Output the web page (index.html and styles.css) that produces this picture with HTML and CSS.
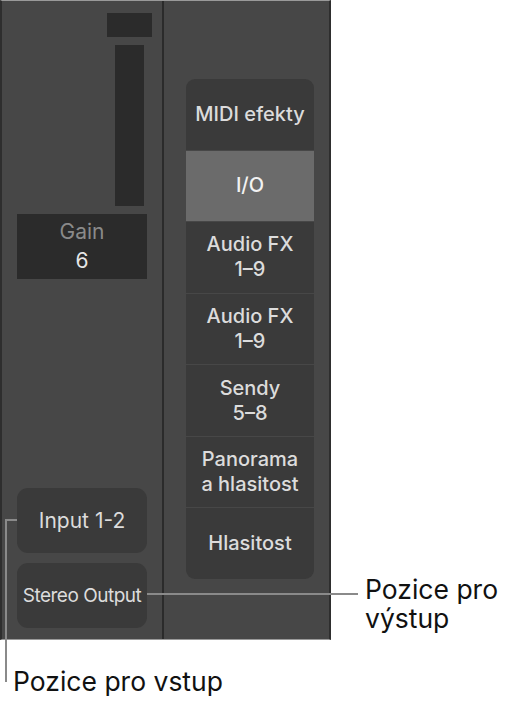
FILE: index.html
```html
<!DOCTYPE html>
<html lang="cs">
<head>
    <meta charset="UTF-8">
    <meta name="viewport" content="width=device-width, initial-scale=1.0">
    <title>Kanálový pás – pozice vstupu a výstupu</title>
    <link rel="stylesheet" href="styles.css">
</head>
<body>
    <div class="figure">
        <div class="top">
            <div class="strip">
                <div class="channel channel-io">
                    <div class="meter">
                        <div class="peak"></div>
                        <div class="fader"></div>
                    </div>
                    <div class="gain">
                        <span class="gain-label">Gain</span>
                        <span class="gain-value">6</span>
                    </div>
                    <div class="slots">
                        <div class="slot">Input 1-2</div>
                        <div class="slot slot-small">Stereo Output</div>
                    </div>
                </div>
                <div class="channel channel-nav">
                    <div class="nav">
                        <div class="nav-item">MIDI efekty</div>
                        <div class="nav-item active">I/O</div>
                        <div class="nav-item">Audio FX<br>1–9</div>
                        <div class="nav-item">Audio FX<br>1–9</div>
                        <div class="nav-item">Sendy<br>5–8</div>
                        <div class="nav-item">Panorama<br>a hlasitost</div>
                        <div class="nav-item">Hlasitost</div>
                    </div>
                </div>
            </div>
            <div class="callout callout-out">Pozice pro<br>výstup</div>
        </div>
        <div class="callout callout-in">Pozice pro vstup</div>

        <span class="leader leader-out"></span>
        <span class="leader leader-in-v"></span>
        <span class="leader leader-in-h"></span>
    </div>
</body>
</html>
```

FILE: styles.css
```css
body {
    margin: 0;
    background-color: #fff;
    font-family: Inter, "Noto Sans", sans-serif;
}

.figure {
    position: relative;
    width: 524px;
    height: 705px;
}

.top {
    display: flex;
    align-items: flex-start;
}

/* panel */
.strip {
    display: flex;
    width: 331px;
    height: 640px;
    box-sizing: border-box;
    background-color: #474747;
    border-top: 1px solid #9a9a9a;
    border-bottom: 1px solid #9a9a9a;
    border-left: 2px solid #2e2e2e;
    border-right: 2px solid #2e2e2e;
}

.channel {
    display: flex;
    flex-direction: column;
}

.channel-io {
    width: 162px;
    padding: 12px 0 11px 15px;
    box-sizing: border-box;
    border-right: 2px solid #2b2b2b;
}

.channel-nav {
    flex: 1;
    padding: 78px 0 0 22px;
}

.meter {
    display: flex;
    flex-direction: column;
    align-items: center;
    align-self: flex-end;
    gap: 8px;
    width: 45px;
    margin-right: 10px;
}

.peak {
    width: 45px;
    height: 24px;
    background-color: #2b2b2b;
}

.fader {
    width: 29px;
    height: 161px;
    background-color: #2b2b2b;
}

.gain {
    display: flex;
    flex-direction: column;
    align-items: center;
    width: 130px;
    height: 65px;
    margin-top: 8px;
    box-sizing: border-box;
    padding-top: 3px;
    background-color: #2b2b2b;
    font-size: 21px;
    line-height: 29px;
}

.gain-label {
    color: #8a8a8a;
}

.gain-value {
    color: #e6e6e6;
}

.slots {
    display: flex;
    flex-direction: column;
    gap: 10px;
    margin-top: auto;
}

.slot {
    display: flex;
    align-items: center;
    justify-content: center;
    width: 130px;
    height: 65px;
    border-radius: 11px;
    background-color: #3a3a3a;
    color: #dcdcdc;
    font-size: 21px;
}

.slot-small {
    font-size: 19px;
    letter-spacing: -0.5px;
}

.nav {
    display: flex;
    flex-direction: column;
    gap: 1px;
    width: 128px;
    height: 500px;
    border-radius: 9px;
    overflow: hidden;
}

.nav-item {
    flex: 1;
    display: flex;
    align-items: center;
    justify-content: center;
    text-align: center;
    background-color: #3a3a3a;
    color: #dcdcdc;
    font-size: 20px;
    font-weight: 500;
    line-height: 25px;
}

.nav-item.active {
    background-color: #6b6b6b;
    color: #f2f2f2;
}

/* callouts */
.callout {
    color: #111;
    font-size: 26.5px;
    line-height: 29px;
}

.callout-out {
    margin: 575px 0 0 34px;
}

.callout-in {
    margin: 27px 0 0 13px;
}

.leader {
    position: absolute;
    background-color: #8a8a8a;
}

.leader-out {
    left: 147px;
    top: 593px;
    width: 211px;
    height: 2px;
}

.leader-in-v {
    left: 5px;
    top: 519px;
    width: 2px;
    height: 163px;
}

.leader-in-h {
    left: 5px;
    top: 519px;
    width: 12px;
    height: 2px;
}
```
